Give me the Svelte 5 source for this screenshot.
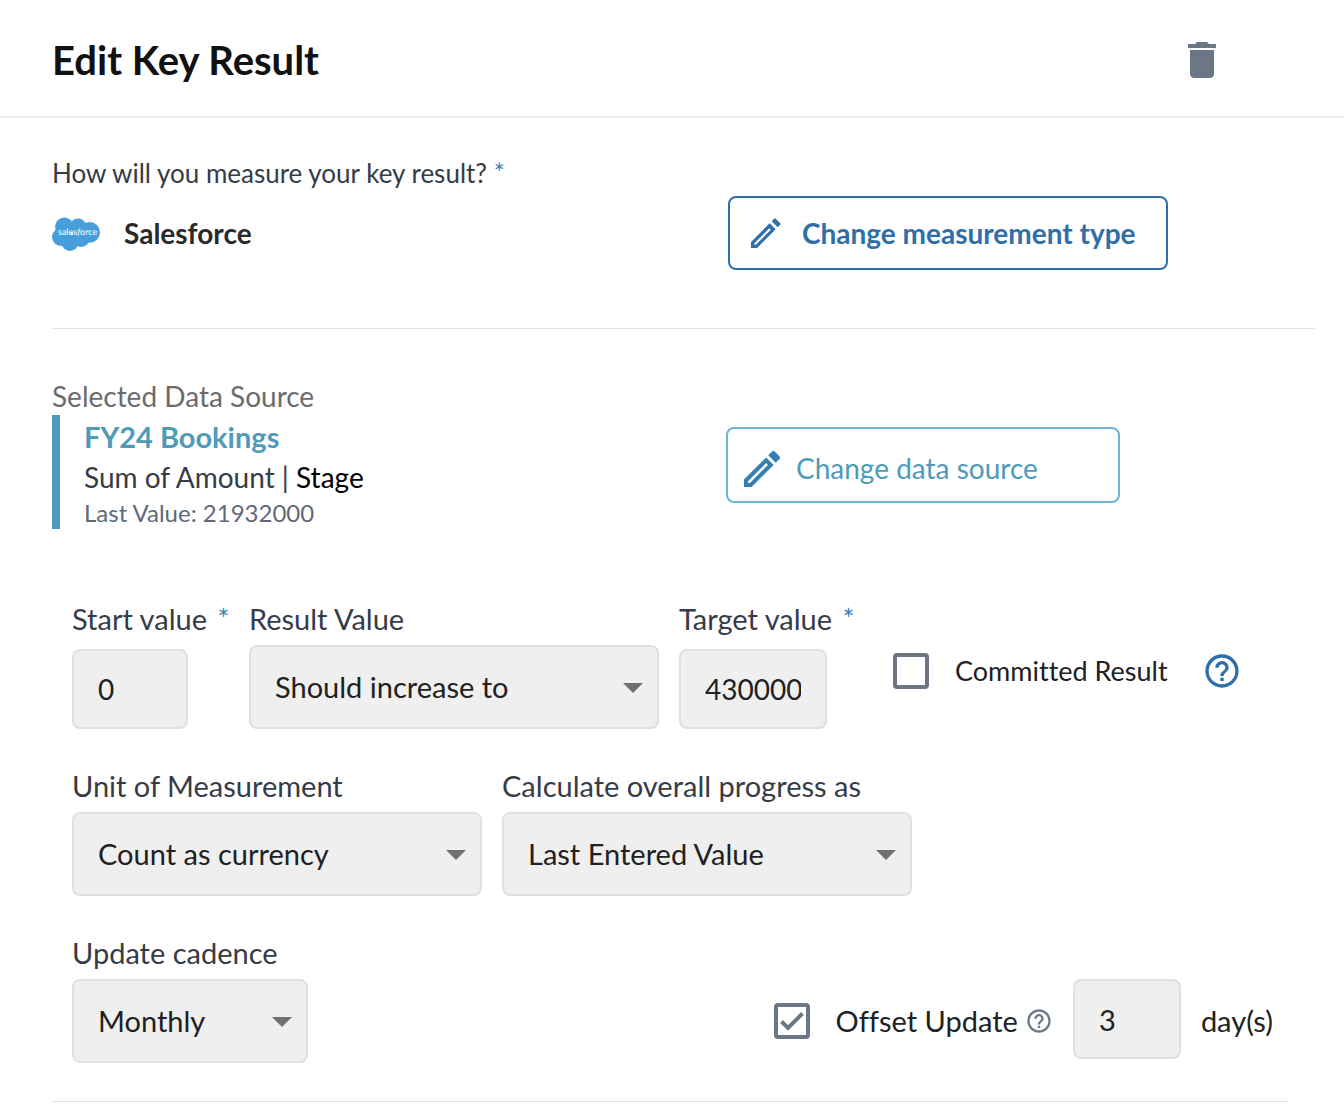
<script>
  let startValue = $state('0');
  let direction = $state('Should increase to');
  let targetValue = $state('43000000');
  let unit = $state('Count as currency');
  let progress = $state('Last Entered Value');
  let cadence = $state('Monthly');
  let offsetDays = $state('3');
  let committed = $state(false);
  let offsetUpdate = $state(true);

  const directions = ['Should increase to', 'Should decrease to'];
  const units = ['Count as currency', 'Count as number', 'Count as percent'];
  const progressTypes = ['Last Entered Value', 'Sum of Values'];
  const cadences = ['Weekly', 'Monthly', 'Quarterly'];
</script>

{#snippet help()}
  <svg viewBox="0 0 24 24" aria-hidden="true">
    <path d="M11 18h2v-2h-2v2zm1-16C6.48 2 2 6.48 2 12s4.48 10 10 10 10-4.48 10-10S17.52 2 12 2zm0 18c-4.41 0-8-3.59-8-8s3.59-8 8-8 8 3.59 8 8-3.59 8-8 8zm0-14c-2.21 0-4 1.79-4 4h2c0-1.1.9-2 2-2s2 .9 2 2c0 2-3 1.75-3 5h2c0-2.25 3-2.5 3-5 0-2.21-1.79-4-4-4z" />
  </svg>
{/snippet}

<div class="page">
  <header>
    <h1>Edit Key Result</h1>
    <button class="icon-btn trash" aria-label="Delete key result">
      <svg viewBox="0 0 24 24" aria-hidden="true">
        <path d="M6 19c0 1.1.9 2 2 2h8c1.1 0 2-.9 2-2V7H6v12zM19 4h-3.5l-1-1h-5l-1 1H5v2h14V4z" />
      </svg>
    </button>
  </header>

  <section class="measure">
    <p class="question">How will you measure your key result? <span class="req">*</span></p>
    <div class="columns">
      <div class="source">
        <svg class="cloud" viewBox="0 0 48 36" aria-hidden="true">
          <g fill="#469fdb">
            <circle cx="12.3" cy="11.8" r="9.3" />
            <circle cx="26" cy="11.6" r="8.2" />
            <circle cx="37.6" cy="17.3" r="10.4" />
            <circle cx="9" cy="22" r="9" />
            <circle cx="18" cy="27.6" r="8.4" />
            <circle cx="29" cy="23" r="9" />
          </g>
          <text x="6" y="20" font-size="9" fill="#fff">sales<tspan font-style="italic">f</tspan>orce</text>
        </svg>
        <strong>Salesforce</strong>
      </div>
      <button class="outline strong">
        <svg viewBox="0 0 24 24" aria-hidden="true">
          <path fill-rule="evenodd" d="M17.4 3l-2 2L19 8.6l2-2zM14.2 6.2L3 17.4V21h3.6L17.8 9.8zM14 9.2l.9.9-9 9H5v-.9z" />
        </svg>
        Change measurement type
      </button>
    </div>
  </section>

  <section class="data">
    <div class="columns">
      <div>
        <p class="caption">Selected Data Source</p>
        <div class="selected">
          <p class="name">FY24 Bookings</p>
          <p class="detail">Sum of Amount | <span>Stage</span></p>
          <p class="last">Last Value: 21932000</p>
        </div>
      </div>
      <button class="outline light">
        <svg viewBox="0 0 24 24" aria-hidden="true">
          <path d="M14.06 9.02l.92.92L5.92 19H5v-.92l9.06-9.06M17.66 3c-.25 0-.51.1-.7.29l-1.83 1.83 3.75 3.75 1.83-1.83c.39-.39.39-1.02 0-1.41l-2.34-2.34c-.2-.2-.45-.29-.71-.29zm-3.6 3.19L3 17.25V21h3.75L17.81 9.94l-3.75-3.75z" />
        </svg>
        Change data source
      </button>
    </div>
  </section>

  <form>
    <div class="row">
      <div class="field start">
        <label for="start">Start value <span class="req">*</span></label>
        <input id="start" type="text" bind:value={startValue} />
      </div>
      <div class="field wide">
        <label for="direction">Result Value</label>
        <div class="select">
          <select id="direction" bind:value={direction}>
            {#each directions as item}<option>{item}</option>{/each}
          </select>
        </div>
      </div>
      <div class="field target">
        <label for="target">Target value <span class="req">*</span></label>
        <input id="target" type="text" bind:value={targetValue} />
      </div>
      <div class="committed">
        <label class="check">
          <span class="box"><input type="checkbox" bind:checked={committed} /></span>
          Committed Result
        </label>
        <button type="button" class="icon-btn help" aria-label="About committed results">{@render help()}</button>
      </div>
    </div>

    <div class="row">
      <div class="field wide">
        <label for="unit">Unit of Measurement</label>
        <div class="select">
          <select id="unit" bind:value={unit}>
            {#each units as item}<option>{item}</option>{/each}
          </select>
        </div>
      </div>
      <div class="field wide">
        <label for="progress">Calculate overall progress as</label>
        <div class="select">
          <select id="progress" bind:value={progress}>
            {#each progressTypes as item}<option>{item}</option>{/each}
          </select>
        </div>
      </div>
    </div>

    <div class="row spread">
      <div class="field cadence">
        <label for="cadence">Update cadence</label>
        <div class="select">
          <select id="cadence" bind:value={cadence}>
            {#each cadences as item}<option>{item}</option>{/each}
          </select>
        </div>
      </div>
      <div class="offset">
        <label class="check">
          <span class="box">
            <input type="checkbox" bind:checked={offsetUpdate} />
            {#if offsetUpdate}
              <svg viewBox="0 0 36 36" aria-hidden="true"><path d="M7.5 18.5l6.5 6.5 14.5-14.5" /></svg>
            {/if}
          </span>
          Offset Update
        </label>
        <button type="button" class="icon-btn hint" aria-label="About offset update">{@render help()}</button>
        <input class="days" type="text" aria-label="Offset in days" bind:value={offsetDays} />
        <span>day(s)</span>
      </div>
    </div>
  </form>
</div>

<style>
  :global(body) {
    margin: 0;
    background: #fff;
  }
  .page {
    font-family: Lato, "Open Sans", sans-serif;
    font-size: 28px;
    line-height: 36px;
    font-variant-ligatures: none;
    color: #212121;
  }
  h1,
  p {
    margin: 0;
  }
  svg {
    display: block;
    fill: currentColor;
  }
  header {
    display: flex;
    align-items: center;
    justify-content: space-between;
    padding: 35px 118px 31px 52px;
    border-bottom: 2px solid #eee;
  }
  h1 {
    font-size: 40px;
    line-height: 50px;
    font-weight: 700;
    color: #111;
  }
  button {
    font: inherit;
    cursor: pointer;
    background: none;
  }
  .icon-btn {
    flex: none;
    padding: 0;
    border: 0;
  }
  .trash {
    width: 48px;
    color: #6b7687;
  }
  .req {
    color: #3b82b8;
  }
  .measure {
    margin-left: 52px;
    margin-right: 29px;
    padding: 37px 0 58px;
    border-bottom: 1px solid #e2e2e2;
  }
  .question {
    font-size: 26px;
    margin-bottom: 5px;
    color: #363c47;
  }
  .columns {
    display: grid;
    grid-template-columns: 676fr 587fr;
    align-items: center;
    justify-items: start;
  }
  .source {
    display: flex;
    align-items: center;
    gap: 24px;
  }
  .cloud {
    width: 48px;
    height: 36px;
    text-rendering: geometricPrecision;
  }
  strong {
    font-weight: 700;
    color: #2a2a2a;
  }
  .outline {
    display: flex;
    align-items: center;
    border-radius: 8px;
    white-space: nowrap;
  }
  .strong {
    gap: 16px;
    padding: 17px 30px 17px 16px;
    border: 2px solid #2e6fa9;
    font-weight: 700;
    color: #2e6fa9;
  }
  .strong svg {
    width: 40px;
    height: 40px;
    margin: -2px 0;
  }
  .light {
    gap: 10px;
    padding: 14px 80px 8px 10px;
    border: 2px solid #6bb6d3;
    color: #4f9ab8;
  }
  .light svg {
    width: 48px;
    height: 48px;
    margin-top: 2px;
    color: #347eb0;
  }
  .data {
    margin-left: 52px;
    margin-right: 29px;
    padding-top: 49px;
  }
  .data .columns {
    grid-template-columns: 674fr 589fr;
    align-items: end;
  }
  .data .outline {
    margin-bottom: 26px;
  }
  .caption {
    color: #6b6b6b;
  }
  .selected {
    margin-top: 1px;
    padding: 2px 0 0 24px;
    border-left: 8px solid #4b98c3;
  }
  .name {
    font-size: 29px;
    line-height: 40px;
    font-weight: 700;
    color: #4f9ab8;
  }
  .detail {
    line-height: 40px;
    color: #363c47;
  }
  .detail span {
    color: #000;
  }
  .last {
    font-size: 24px;
    line-height: 32px;
    color: #5f697a;
  }
  form {
    display: flex;
    flex-direction: column;
    gap: 39px;
    margin-left: 52px;
    margin-right: 55px;
    padding: 72px 16px 38px 20px;
    border-bottom: 1px solid #e2e2e2;
  }
  .row {
    display: flex;
    gap: 20px;
  }
  .spread {
    justify-content: space-between;
  }
  .field {
    display: flex;
    flex-direction: column;
    justify-content: space-between;
    gap: 8px;
  }
  .field label {
    font-size: 29px;
    color: #363c47;
    white-space: nowrap;
  }
  .field .req {
    margin-left: 3px;
    font-size: 28px;
  }
  .start {
    width: 157px;
  }
  .start input {
    width: 116px;
  }
  .wide {
    flex: 0 1 410px;
  }
  .target {
    width: 174px;
  }
  .target input {
    width: 148px;
  }
  .cadence {
    width: 236px;
  }
  input[type="text"],
  select {
    box-sizing: border-box;
    height: 80px;
    padding: 0 24px;
    border: 2px solid #e0e0e0;
    border-radius: 8px;
    background: #efefef;
    font: inherit;
    color: #212121;
  }
  select {
    appearance: none;
    width: 100%;
    height: 84px;
    font-size: 29px;
  }
  .select {
    position: relative;
  }
  /* dropdown arrow */
  .select::after {
    content: "";
    position: absolute;
    top: 38px;
    right: 16px;
    border: 10px solid transparent;
    border-top-color: #707070;
    border-bottom: 0;
    pointer-events: none;
  }
  .committed {
    display: flex;
    align-items: center;
    align-self: flex-end;
    gap: 34px;
    margin-left: 20px;
    padding-bottom: 40px;
    font-size: 27px;
  }
  .check {
    display: flex;
    align-items: center;
    gap: 26px;
    white-space: nowrap;
  }
  .box {
    position: relative;
    flex: none;
    width: 36px;
    height: 36px;
  }
  .box input {
    appearance: none;
    display: block;
    box-sizing: border-box;
    width: 36px;
    height: 36px;
    margin: 0;
    border: 4px solid #6b7687;
    border-radius: 4px;
  }
  .box svg {
    position: absolute;
    inset: 0;
    fill: none;
    stroke: #6b7687;
    stroke-width: 4;
    pointer-events: none;
  }
  .help {
    width: 40px;
    margin: -2px 0;
    color: #2e6fa9;
  }
  .offset {
    display: flex;
    align-items: center;
    align-self: flex-end;
    height: 84px;
    font-size: 29px;
  }
  .hint {
    width: 28px;
    margin: 0 20px 0 7px;
    color: #6b7687;
  }
  .offset .days {
    align-self: flex-start;
    width: 108px;
    margin-right: 20px;
  }
</style>
